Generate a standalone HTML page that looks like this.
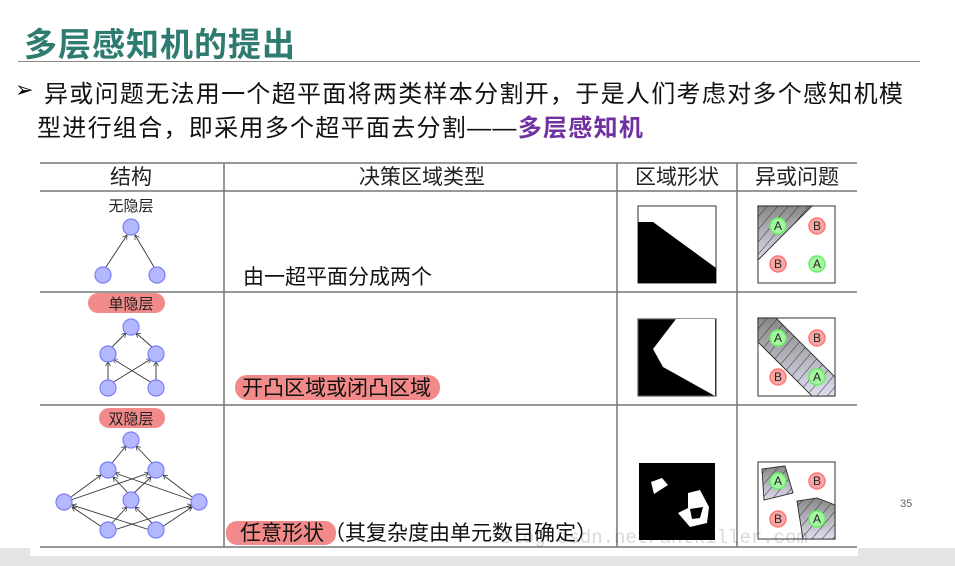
<!DOCTYPE html>
<html><head><meta charset="utf-8"><style>
body{margin:0;width:955px;height:566px;background:#fff;position:relative;overflow:hidden;font-family:"Liberation Sans","Noto Sans CJK SC",sans-serif}
.a{position:absolute;white-space:nowrap}
</style></head><body>
<div class="a" style="left:24px;top:18px;font-size:33px;font-weight:bold;color:#2e7b70;letter-spacing:1px">多层感知机的提出</div>
<div class="a" style="left:18px;top:61px;width:902px;height:1px;background:#888"></div>
<div class="a" style="left:15px;top:77px;font-size:22px;color:#000">➢</div>
<div class="a" style="left:44px;top:74px;font-size:24px;letter-spacing:1.3px;color:#111">异或问题无法用一个超平面将两类样本分割开，于是人们考虑对多个感知机模</div>
<div class="a" style="left:37px;top:108px;font-size:24px;letter-spacing:1.3px;color:#111">型进行组合，即采用多个超平面去分割——<b style="color:#7030a0">多层感知机</b></div>
<div class="a" style="left:0;top:548px;width:955px;height:18px;background:#e4e4e4"></div>
<div class="a" style="left:30px;top:540px;width:828px;height:16px;background:#fff"></div>
<svg class="a" style="left:0;top:0" width="955" height="566">
<defs>
<linearGradient id="g" x1="0" y1="0" x2="0" y2="1"><stop offset="0" stop-color="#888"/><stop offset="1" stop-color="#dde"/></linearGradient>
<pattern id="h" width="8" height="8" patternUnits="userSpaceOnUse" patternTransform="rotate(40)"><line x1="0" y1="0" x2="0" y2="8" stroke="#333" stroke-width="1"/></pattern>
<marker id="ar" markerWidth="6" markerHeight="6" refX="5" refY="3" orient="auto"><path d="M0,0L5,3L0,6" fill="none" stroke="#333" stroke-width="0.8"/></marker>
</defs>
<g stroke="#777" stroke-width="1.5">
<line x1="40" y1="163" x2="857" y2="163"/><line x1="40" y1="191" x2="857" y2="191"/>
<line x1="40" y1="292" x2="857" y2="292"/><line x1="40" y1="405" x2="857" y2="405"/>
<line x1="40" y1="547" x2="857" y2="547"/>
<line x1="224" y1="163" x2="224" y2="547"/><line x1="617" y1="163" x2="617" y2="547"/><line x1="737" y1="163" x2="737" y2="547"/>
</g>
<g font-size="21" fill="#222" text-anchor="middle">
<text x="131" y="184">结构</text><text x="422" y="184">决策区域类型</text><text x="677" y="184">区域形状</text><text x="797" y="184">异或问题</text>
</g>
<text x="131" y="211" font-size="15" fill="#222" text-anchor="middle">无隐层</text>
<rect x="88" y="293" width="77" height="20" rx="10" fill="#f28a8a"/>
<text x="131" y="309" font-size="15" fill="#222" text-anchor="middle">单隐层</text>
<rect x="99" y="408" width="66" height="20" rx="10" fill="#f28a8a"/>
<text x="131" y="424" font-size="15" fill="#222" text-anchor="middle">双隐层</text>
<g stroke="#333" stroke-width="0.9" marker-end="url(#ar)">
<line x1="106" y1="267" x2="127" y2="235"/><line x1="154" y1="267" x2="135" y2="235"/>
<line x1="112" y1="347" x2="126" y2="333"/><line x1="152" y1="347" x2="136" y2="333"/>
<line x1="108" y1="380" x2="108" y2="362"/><line x1="156" y1="380" x2="156" y2="362"/>
<line x1="112" y1="383" x2="151" y2="359"/><line x1="152" y1="383" x2="113" y2="359"/>
<line x1="112" y1="463" x2="126" y2="446"/><line x1="152" y1="463" x2="136" y2="446"/>
<line x1="71" y1="497" x2="101" y2="475"/><line x1="71" y1="500" x2="149" y2="473"/>
<line x1="192" y1="497" x2="163" y2="475"/><line x1="192" y1="500" x2="115" y2="473"/>
<line x1="128" y1="493" x2="113" y2="477"/><line x1="134" y1="493" x2="151" y2="477"/>
<line x1="102" y1="527" x2="72" y2="507"/><line x1="162" y1="527" x2="192" y2="507"/>
<line x1="114" y1="530" x2="192" y2="505"/><line x1="150" y1="530" x2="72" y2="505"/>
<line x1="112" y1="523" x2="127" y2="507"/><line x1="152" y1="523" x2="135" y2="507"/>
</g>
<g fill="#b4b8ff" stroke="#7a7ef5" stroke-width="1.2">
<circle cx="131" cy="227" r="8"/><circle cx="103" cy="275" r="8"/><circle cx="157" cy="275" r="8"/>
<circle cx="131" cy="327" r="8"/><circle cx="108" cy="354" r="8"/><circle cx="156" cy="354" r="8"/><circle cx="108" cy="388" r="8"/><circle cx="156" cy="388" r="8"/>
<circle cx="131" cy="440" r="8"/><circle cx="108" cy="470" r="8"/><circle cx="156" cy="470" r="8"/><circle cx="64" cy="502" r="8"/><circle cx="131" cy="500" r="8"/><circle cx="199" cy="502" r="8"/><circle cx="108" cy="530" r="8"/><circle cx="156" cy="530" r="8"/>
</g>
<text x="243" y="284" font-size="21" fill="#111">由一超平面分成两个</text>
<rect x="235" y="375" width="205" height="25" rx="12" fill="#f28a8a"/>
<text x="242" y="395" font-size="21" fill="#111">开凸区域或闭凸区域</text>
<rect x="226" y="521" width="110" height="24" rx="11" fill="#f28a8a"/>
<text x="240" y="540" font-size="21" fill="#111">任意形状（其复杂度由单元数目确定）</text>
<g stroke="#555" stroke-width="1.2">
<rect x="638" y="206" width="78" height="77" fill="#fff"/>
<rect x="638" y="319" width="78" height="77" fill="#000"/>
<rect x="639" y="463" width="76" height="77" fill="#000" stroke="none"/>
</g>
<polygon points="638,222 653,222 716,268 716,283 638,283" fill="#000"/>
<polygon points="676,319 715,319 715,396 663,367 653,349" fill="#fff"/>
<polygon points="651,482 662,478 668,485 654,494" fill="#fff"/>
<path d="M688,493L700,490L709,507L707,523L690,527L678,513L688,508ZM690,509L692,519L700,518L703,507Z" fill="#fff" fill-rule="evenodd"/>
<g stroke="#555" stroke-width="1.2" fill="#fff">
<rect x="758" y="206" width="77" height="77"/><rect x="758" y="318" width="77" height="78"/><rect x="758" y="462" width="77" height="77"/>
</g>
<g stroke="#333" stroke-width="0.8">
<polygon points="758,206 812,206 758,260" fill="url(#g)"/><polygon points="758,206 812,206 758,260" fill="url(#h)"/>
<polygon points="758,318 776,318 835,377 835,396 812,396 758,342" fill="url(#g)"/><polygon points="758,318 776,318 835,377 835,396 812,396 758,342" fill="url(#h)"/>
<polygon points="762,469 785,466 793,493 764,500" fill="url(#g)"/><polygon points="762,469 785,466 793,493 764,500" fill="url(#h)"/>
<polygon points="797,501 817,498 835,505 835,539 803,539" fill="url(#g)"/><polygon points="797,501 817,498 835,505 835,539 803,539" fill="url(#h)"/>
</g>
<g font-size="12" text-anchor="middle" fill="#222" stroke-width="1.5">
<circle cx="778" cy="226" r="8" fill="#a6f5a0" stroke="#6e6"/><text x="778" y="230">A</text>
<circle cx="817" cy="226" r="8" fill="#f9a6a6" stroke="#f77"/><text x="817" y="230">B</text>
<circle cx="778" cy="264" r="8" fill="#f9a6a6" stroke="#f77"/><text x="778" y="268">B</text>
<circle cx="817" cy="264" r="8" fill="#a6f5a0" stroke="#6e6"/><text x="817" y="268">A</text>
<circle cx="778" cy="338" r="8" fill="#a6f5a0" stroke="#6e6"/><text x="778" y="342">A</text>
<circle cx="817" cy="338" r="8" fill="#f9a6a6" stroke="#f77"/><text x="817" y="342">B</text>
<circle cx="778" cy="377" r="8" fill="#f9a6a6" stroke="#f77"/><text x="778" y="381">B</text>
<circle cx="817" cy="377" r="8" fill="#a6f5a0" stroke="#6e6"/><text x="817" y="381">A</text>
<circle cx="778" cy="481" r="8" fill="#a6f5a0" stroke="#6e6"/><text x="778" y="485">A</text>
<circle cx="817" cy="481" r="8" fill="#f9a6a6" stroke="#f77"/><text x="817" y="485">B</text>
<circle cx="778" cy="519" r="8" fill="#f9a6a6" stroke="#f77"/><text x="778" y="523">B</text>
<circle cx="817" cy="519" r="8" fill="#a6f5a0" stroke="#6e6"/><text x="817" y="523">A</text>
</g>
<text x="500" y="543" font-family="Liberation Mono" font-size="19" fill="#000" opacity="0.15">blog.csdn.net/antkiller.com</text>
<text x="900" y="507" font-size="11" fill="#666">35</text>
</svg>
</body></html>
